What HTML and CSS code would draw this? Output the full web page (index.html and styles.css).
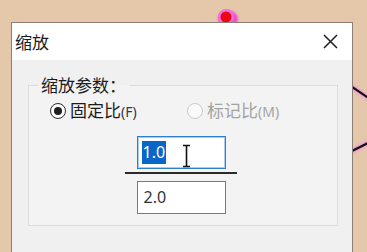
FILE: index.html
```html
<!DOCTYPE html>
<html lang="zh-CN">
<head>
<meta charset="utf-8">
<title>缩放</title>
<link rel="stylesheet" href="styles.css">
</head>
<body>
<svg class="backdrop" width="367" height="252" viewBox="0 0 367 252">
  <defs>
    <filter id="glow" x="-50%" y="-50%" width="200%" height="200%">
      <feGaussianBlur stdDeviation="0.8"/>
    </filter>
  </defs>
  <g filter="url(#glow)">
    <line x1="330" y1="72" x2="370" y2="99" stroke="#ee9ad8" stroke-width="5"/>
    <line x1="330" y1="162" x2="370" y2="142" stroke="#ee9ad8" stroke-width="5"/>
    <ellipse cx="228" cy="19" rx="10" ry="8.5" fill="#e850d4"/>
  </g>
  <line x1="330" y1="72" x2="370" y2="99" stroke="#111" stroke-width="2.2"/>
  <line x1="330" y1="162" x2="370" y2="142" stroke="#111" stroke-width="2.2"/>
  <circle cx="226" cy="17" r="8" fill="#f070dc"/>
  <circle cx="226" cy="17" r="5.5" fill="#ee0612"/>
</svg>

<div class="dialog">
  <div class="titlebar">
    <span class="title">缩放</span>
    <svg class="close" width="15" height="15" viewBox="0 0 15 15">
      <path d="M1 1 L14 14 M14 1 L1 14" stroke="#1e1e1e" stroke-width="1.5" fill="none"/>
    </svg>
  </div>
  <div class="body">
    <fieldset class="group">
      <legend class="legend">缩放参数：</legend>
      <div class="radios">
        <div class="radio-item">
          <span class="radio checked"><span class="dot"></span></span>
          <span class="radio-label">固定比<span class="key">(F)</span></span>
        </div>
        <div class="radio-item disabled">
          <span class="radio"></span>
          <span class="radio-label">标记比<span class="key">(M)</span></span>
        </div>
      </div>
      <div class="fraction">
        <div class="field focused">
          <span class="selected">1.0</span>
          <svg class="ibeam" width="9" height="24" viewBox="0 0 9 24">
            <path d="M1 1.5 H8 M4.5 1.5 V22.5 M1 22.5 H8" stroke="#111" stroke-width="1.6" fill="none"/>
          </svg>
        </div>
        <div class="bar"></div>
        <div class="field">
          <span class="value">2.0</span>
        </div>
      </div>
    </fieldset>
  </div>
</div>
</body>
</html>
```

FILE: styles.css
```css
html, body {
  margin: 0;
  padding: 0;
}
body {
  width: 367px;
  height: 252px;
  overflow: hidden;
  position: relative;
  background: #e5c7a9;
  font-family: "Noto Sans CJK SC", "Noto Sans", sans-serif;
  color: #1a1a1a;
}
.backdrop {
  position: absolute;
  left: 0;
  top: 0;
}
.dialog {
  position: relative;
  box-sizing: border-box;
  margin: 22px 0 0 11px;
  width: 342px;
  height: 240px;
  border: 1px solid #8d7f78;
  border-bottom: none;
  background: #f0f0f0;
}
.titlebar {
  height: 37px;
  background: #ffffff;
  display: flex;
  align-items: center;
  justify-content: space-between;
  padding: 0 14px 0 3px;
}
.title {
  font-size: 17px;
  line-height: 20px;
  color: #1c1c1c;
}
.close {
  display: block;
}
.body {
  padding: 16px 14px 0 16px;
}
.group {
  margin: 0;
  padding: 0 0 11px 9px;
  border: 1px solid #dcdcdc;
  background: #f3f3f3;
  min-width: 0;
}
.legend {
  padding: 0 3px;
  font-size: 17px;
  line-height: 18px;
  color: #1c1c1c;
}
.radios {
  display: grid;
  grid-template-columns: 137px auto;
  margin: 7px 0 0 12px;
  height: 18px;
  align-items: center;
}
.radio-item {
  display: flex;
  align-items: center;
  gap: 4px;
}
.radio {
  box-sizing: border-box;
  width: 16px;
  height: 16px;
  border-radius: 50%;
  border: 1px solid #c9c9c9;
  background: #fafafa;
  display: flex;
  align-items: center;
  justify-content: center;
}
.radio.checked {
  border-color: #2a2a2a;
  background: #ffffff;
}
.dot {
  width: 8px;
  height: 8px;
  border-radius: 50%;
  background: #1f1f1f;
}
.radio-label {
  font-size: 17px;
  line-height: 18px;
  color: #1c1c1c;
}
.key {
  font-family: "Noto Sans", sans-serif;
  font-size: 14px;
  color: #33364a;
}
.disabled .radio-label,
.disabled .key {
  color: #a3a3a3;
}
.fraction {
  display: flex;
  flex-direction: column;
  align-items: center;
  margin-top: 17px;
  padding-right: 13px;
}
.field {
  position: relative;
  box-sizing: border-box;
  width: 89px;
  height: 33px;
  border: 1px solid #7a7a7a;
  background: #ffffff;
  padding: 0 0 0 6px;
  display: flex;
  align-items: center;
  font-family: "Noto Sans", sans-serif;
  font-size: 16px;
}
.field.focused {
  border: 1px solid #2f7fd0;
  box-shadow: inset 0 0 0 1px #a9cdf0;
  padding-left: 4px;
}
.selected {
  background: #0a66c8;
  color: #ffffff;
  line-height: 23px;
  padding: 0 1px;
}
.value {
  color: #333;
  line-height: 23px;
}
.ibeam {
  position: absolute;
  left: 44px;
  top: 7px;
}
.bar {
  width: 112px;
  height: 2px;
  background: #2b2b2b;
  margin: 3px 0 7px;
}
```
